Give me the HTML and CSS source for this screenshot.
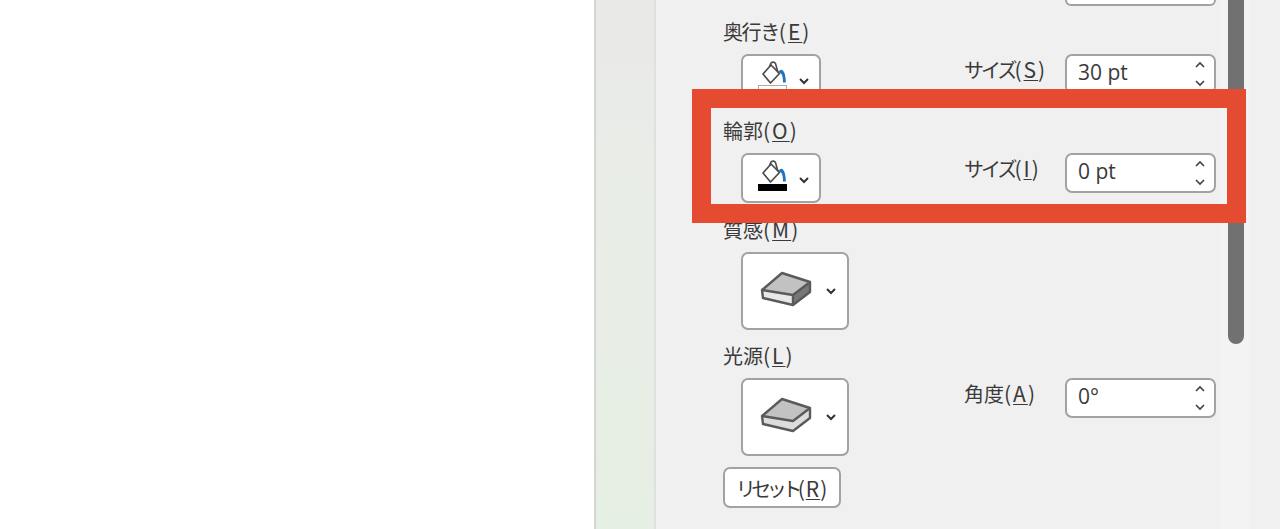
FILE: index.html
```html
<!DOCTYPE html>
<html lang="ja">
<head>
<meta charset="utf-8">
<title>3-D 書式</title>
<link rel="stylesheet" href="styles.css">
</head>
<body>
<svg class="defs" width="0" height="0" aria-hidden="true">
  <defs>
    <symbol id="bucket" viewBox="0 0 28 24">
      <path d="M3 13 11 4 19.5 12.5 10.5 22Z" fill="#fff" stroke="#4a4a4a" stroke-width="1.7" stroke-linejoin="round"/>
      <path d="M9.5 5.5 11 2Q13.5 0 15.5 2.5L18 11.5" fill="none" stroke="#4a4a4a" stroke-width="1.6"/>
      <path d="M18.5 11Q20.5 7.5 23 9.5Q25.8 13 25.8 21.5L23 21.5Q23 14.5 21 12.5Z" fill="#1f74bd"/>
    </symbol>
    <symbol id="chev" viewBox="0 0 12 8">
      <path d="M2 2 6 6 10 2" fill="none" stroke="#333" stroke-width="2"/>
    </symbol>
    <symbol id="spinup" viewBox="0 0 12 8">
      <path d="M2 6 6 2 10 6" fill="none" stroke="#444" stroke-width="1.7"/>
    </symbol>
    <symbol id="spindown" viewBox="0 0 12 8">
      <path d="M2 2 6 6 10 2" fill="none" stroke="#444" stroke-width="1.7"/>
    </symbol>
  </defs>
</svg>
<main class="window">
  <div class="blank"></div>
  <div class="strip"></div>
  <section class="panel">
    <div class="stub"></div>

    <div class="group first">
      <div class="title"><span class="kana">奥行き</span><span class="latin">(<u>E</u>)</span></div>
      <button class="colorbtn"><svg class="bucket"><use href="#bucket"/></svg><span class="swatch white"></span><svg class="chev"><use href="#chev"/></svg></button>
      <div class="sizelabel"><span class="kana narrow">サイズ</span><span class="latin">(<u>S</u>)</span></div>
      <div class="spin"><span>30 pt</span><span class="arrows"><svg><use href="#spinup"/></svg><svg><use href="#spindown"/></svg></span></div>
    </div>

    <div class="group">
      <div class="title">輪郭<span class="latin">(<u>O</u>)</span></div>
      <button class="colorbtn"><svg class="bucket"><use href="#bucket"/></svg><span class="swatch black"></span><svg class="chev"><use href="#chev"/></svg></button>
      <div class="sizelabel"><span class="kana narrow">サイズ</span><span class="latin">(<u>I</u>)</span></div>
      <div class="spin"><span>0 pt</span><span class="arrows"><svg><use href="#spinup"/></svg><svg><use href="#spindown"/></svg></span></div>
    </div>

    <div class="group">
      <div class="title">質感<span class="latin">(<u>M</u>)</span></div>
      <button class="shapebtn">
        <svg class="cube" viewBox="0 0 52 38"><path d="M2 20 22 3 50 12 50 22 33 35 3 28Z" fill="#e8e8e8"/><path d="M2 20 22 3 50 12 33 25Z" fill="#c2c2c2"/><path d="M33 25 50 12 50 22 33 35Z" fill="#777"/><path d="M2 20 22 3 50 12 50 22 33 35 3 28Z M2 20 33 25 50 12 M33 25 33 35" fill="none" stroke="#5a5a5a" stroke-width="2.4" stroke-linejoin="round"/></svg>
        <svg class="chev"><use href="#chev"/></svg>
      </button>
    </div>

    <div class="group tight">
      <div class="title">光源<span class="latin">(<u>L</u>)</span></div>
      <button class="shapebtn">
        <svg class="cube" viewBox="0 0 52 38"><path d="M2 20 22 3 50 12 50 22 33 35 3 28Z" fill="#dcdcdc"/><path d="M2 20 22 3 50 12 33 25Z" fill="#c2c2c2"/><path d="M2 20 22 3 50 12 50 22 33 35 3 28Z M2 20 33 25 50 12" fill="none" stroke="#5a5a5a" stroke-width="2.4" stroke-linejoin="round"/></svg>
        <svg class="chev"><use href="#chev"/></svg>
      </button>
      <div class="sizelabel">角度<span class="latin">(<u>A</u>)</span></div>
      <div class="spin"><span>0°</span><span class="arrows"><svg><use href="#spinup"/></svg><svg><use href="#spindown"/></svg></span></div>
    </div>

    <button class="reset"><span class="kana narrower">リセット</span><span class="latin tight">(<u>R</u>)</span></button>
  </section>
  <div class="track"><div class="thumb"></div></div>
  <div class="tail"></div>
</main>
<div class="highlight"></div>
</body>
</html>
```

FILE: styles.css
```css
* { box-sizing: border-box; }
html, body { margin: 0; height: 529px; overflow: hidden; background: #fff; }
body {
  font-family: "Noto Sans CJK JP", "Noto Sans", sans-serif;
  font-size: 20px;
  color: #3a3a3a;
  position: relative;
}
.defs { position: absolute; }
u { text-underline-offset: 2px; text-decoration-thickness: 1px; }
.kana { letter-spacing: -1.4px; }
.kana.narrow { letter-spacing: -3px; }
.kana.narrower { letter-spacing: -4.5px; }
.latin { font-size: 21px; letter-spacing: 2px; }
.latin.tight { letter-spacing: 1px; }

.window { display: flex; height: 529px; overflow: hidden; }
.blank { width: 594px; background: #fff; }
.strip {
  width: 62px;
  background: linear-gradient(180deg, #e9e9e8 0, #e9ede7 38%, #e6efe3 100%);
  border-left: 2px solid #d4d6d2;
  border-right: 2px solid #e0e0e0;
}
.panel {
  width: 564px;
  background: #f0f0f0;
  padding-left: 67px;
  overflow: hidden;
}
.track { width: 30px; background: #f3f3f3; padding-left: 8px; }
.thumb { width: 16px; height: 344px; background: #717171; border-radius: 0 0 8px 8px; }
.tail { flex: 1; background: #f0f0f0; }

.stub {
  width: 151px;
  height: 6px;
  margin-left: 342px;
  background: #fff;
  border: 2px solid #a2a2a2;
  border-top: 0;
  border-radius: 0 0 7px 7px;
}

.group {
  display: grid;
  grid-template-columns: 241px 101px 151px;
  grid-template-rows: 22px auto;
  row-gap: 11px;
  margin-top: 16px;
}
.group.first, .group.tight { margin-top: 15px; }
.title { grid-column: 1 / 4; height: 22px; line-height: 21px; white-space: nowrap; }
.sizelabel { line-height: 22px; padding-top: 4px; white-space: nowrap; }

.colorbtn, .shapebtn, .reset, .spin {
  background: #fff;
  border: 2px solid #a2a2a2;
  border-radius: 7px;
  padding: 0;
  font: inherit;
  color: inherit;
}
.colorbtn {
  position: relative;
  display: block;
  width: 80px;
  height: 50px;
  margin-left: 18px;
}
.bucket { position: absolute; left: 17px; top: 5px; width: 28px; height: 24px; }
.swatch { position: absolute; left: 15px; top: 29px; width: 29px; height: 7px; }
.swatch.black { background: #000; }
.swatch.white { background: #fff; border: 1px solid #aaa; }
.chev { width: 12px; height: 8px; }
.colorbtn .chev { position: absolute; right: 9px; top: 21px; }

.shapebtn {
  display: flex;
  align-items: center;
  width: 108px;
  height: 78px;
  margin-left: 18px;
  padding-left: 17px;
}
.cube { width: 52px; height: 38px; margin-top: -4px; }
.shapebtn .chev { margin-left: 13px; margin-top: -1px; }

.spin {
  display: flex;
  justify-content: space-between;
  align-items: center;
  height: 40px;
  padding: 0 8px 0 11px;
  font-family: "Open Sans", "Noto Sans", sans-serif;
  font-size: 21px;
}
.spin > span:first-child { margin-top: -4px; }
.arrows { display: flex; flex-direction: column; gap: 10px; }
.arrows svg { display: block; width: 12px; height: 8px; }

.reset {
  display: block;
  width: 118px;
  height: 41px;
  margin-top: 11px;
  white-space: nowrap;
}

.highlight {
  position: absolute;
  left: 692px;
  top: 89px;
  width: 554px;
  height: 134px;
  border: 19px solid #e54b30;
}
```
